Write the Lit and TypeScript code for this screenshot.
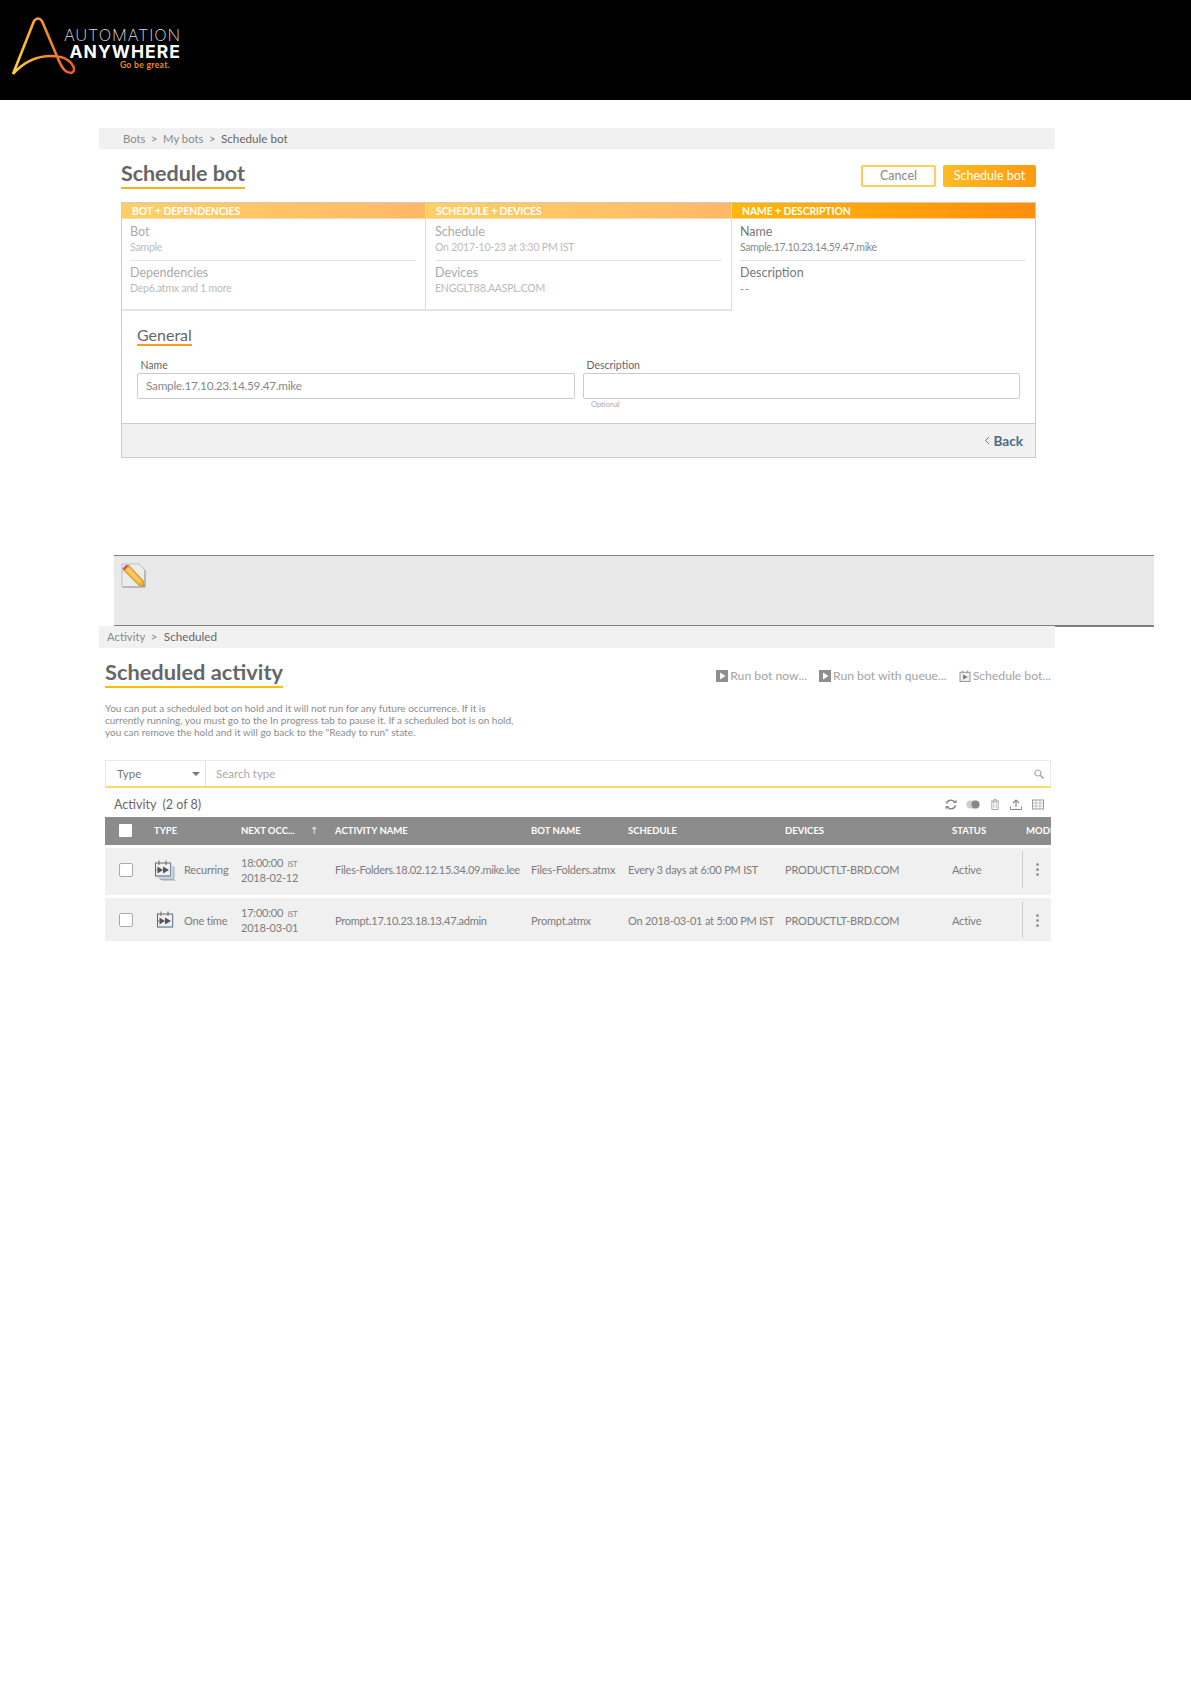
import { LitElement, html, css, svg } from "lit";
import { customElement } from "lit/decorators.js";

const playSquare = html`<svg class="act-ico" viewBox="0 0 12 12"><rect width="12" height="12" fill="#8f8f8f"/><path d="M4 2.5 L9.5 6 L4 9.5Z" fill="#fff"/></svg>`;
const calPlay = html`<svg class="act-ico" viewBox="0 0 12 13"><rect x=".6" y="2.4" width="10.8" height="10" fill="#eee" stroke="#8f8f8f" stroke-width="1"/><path d="M3.5 .5V3M8.5 .5V3" stroke="#8f8f8f"/><path d="M4 4.8 L9 7.5 L4 10.2Z" fill="#777"/></svg>`;
const typeOnce = svg`<rect x="1.5" y="4" width="15" height="13" fill="none" stroke="#666"/><path d="M5 1.5V6M12 1.5V6" stroke="#666"/><path d="M1.5 17.4h15.4V4" fill="none" stroke="#7ea9d1" stroke-width=".8"/><path d="M3.5 7.5 L9 11 L3.5 14.5ZM9 7.5 L15 11 L9 14.5Z" fill="#555"/><path d="M1 11h3" stroke="#666" stroke-width=".8"/>`;

@customElement("app-root")
export class AppRoot extends LitElement {
  static styles = css`
    :host { display: block; width: 1191px; height: 1684px; background: #fff; font-family: Lato, "Open Sans", sans-serif; color: #777; overflow: hidden; }
    * { box-sizing: border-box; }
    .top { height: 100px; background: #000; display: flex; padding: 15px 0 0 11px; }
    .logo-svg { width: 64px; height: 64px; display: block; }
    .logo-text { width: 107px; margin-left: -1px; padding-top: 13px; display: flex; flex-direction: column; align-items: flex-end; font-family: Inter, sans-serif; }
    .lt1 { color: #ddd; font-weight: 200; font-size: 16.5px; line-height: 15px; letter-spacing: .85px; white-space: nowrap; }
    .lt2 { color: #fff; font-weight: 700; font-size: 17.5px; line-height: 17px; letter-spacing: 1.05px; white-space: nowrap; }
    .lt3 { color: #e88a2a; font-weight: 700; font-size: 8.6px; line-height: 9px; margin: 1px 11px 0 0; white-space: nowrap; font-family: Lato, sans-serif; letter-spacing: .3px; }

    .sec1 { margin: 28px 0 0 99px; width: 956px; }
    .crumb { height: 21px; background: #f1f1f1; font-size: 11.3px; line-height: 20px; color: #8a8a8a; display: flex; align-items: baseline; gap: 5.5px; padding-left: 24px; white-space: nowrap; }
    .crumb b { font-weight: 400; color: #666; font-size: 11.7px; }
    .crumb.second { height: 22px; padding-left: 8px; margin-top: -1px; position: relative; }
    .crumb.second b { margin-left: 1px; }
    .inner { margin-left: 22px; width: 915px; }
    .title-row { display: flex; justify-content: space-between; align-items: flex-start; height: 39px; margin-top: 14px; }
    .h1 { display: inline-block; font-size: 21.5px; font-weight: 700; line-height: 21px; color: #666; padding-bottom: 3px; border-bottom: 2px solid #ffae14; white-space: nowrap; letter-spacing: -.05px; }
    .btns { display: flex; gap: 7px; margin-top: 2px; }
    .btn { height: 22px; border-radius: 2px; font-size: 12.5px; line-height: 18px; text-align: center; }
    .btn.c { width: 75px; border: 2px solid #ffcf55; color: #888; background: #fff; }
    .btn.s { width: 93px; background: linear-gradient(90deg, #ffbb22, #ff9a10); color: #fff; line-height: 21px; }

    .panel { border: 1px solid #ccc; height: 256px; display: flex; flex-direction: column; }
    .tabs { display: grid; grid-template-columns: 304px 306px 303px; height: 108px; flex: none; }
    .tab { display: flex; flex-direction: column; border-right: 1px solid #ddd; border-bottom: 2px solid #e4e4e4; }
    .tab.cur { border: 0; }
    .tab-h { height: 16px; flex: none; padding-left: 10px; font-size: 10.4px; line-height: 16px; font-weight: 700; color: #fff; white-space: nowrap; border-bottom: 1px solid #ffd9a0; letter-spacing: -.1px; background: linear-gradient(90deg, #ffcf66, #ffb866); }
    .tab.cur .tab-h { background: linear-gradient(90deg, #ffb70a, #ff8e0c); }
    .tab-b { padding: 3px 9px 0 9px; }
    .tab:first-child .tab-b, .tab.cur .tab-b { padding-left: 8px; }
    .f { height: 38px; }
    .f + .f { border-top: 1px solid #e4e4e4; }
    .lab { font-size: 12.5px; line-height: 19px; color: #aaa; white-space: nowrap; }
    .f + .f .lab { padding-top: 2px; line-height: 19px; box-sizing: content-box; }
    .val { font-size: 10.5px; line-height: 13px; color: #bbb; white-space: nowrap; letter-spacing: -.2px; }
    .cur .lab { color: #777; }
    .cur .val { color: #888; letter-spacing: -.3px; }
    .cur .val.dash { letter-spacing: 1px; font-size: 11px; }
    .form { flex: 1; padding: 15px 15px 0 15px; }
    .h2 { display: inline-block; font-size: 16px; line-height: 17px; color: #666; border-bottom: 2px solid #ff9a1e; padding-bottom: 1px; vertical-align: top; }
    .h2-wrap { height: 33px; }
    .cols { display: grid; grid-template-columns: 438px 437px; column-gap: 8px; }
    .fl { font-size: 10.5px; line-height: 12px; height: 14px; color: #666; padding-left: 3.5px; }
    .inp { height: 26px; border: 1px solid #ccc; border-radius: 2px; font-size: 11.8px; line-height: 24px; color: #888; padding-left: 8px; white-space: nowrap; letter-spacing: -.27px; }
    .opt { font-size: 7.5px; line-height: 9px; color: #aaa; padding: 1px 0 0 8px; }
    .foot { height: 34px; flex: none; background: #f1f1f1; border-top: 1px solid #ccc; display: flex; justify-content: flex-end; align-items: center; gap: 3px; padding-right: 12px; color: #4d6a86; font-weight: 700; font-size: 13.6px; }

    .note { margin: 97px 0 0 114px; width: 1040px; height: 72px; background: #e9e9e9; border-top: 1px solid #808080; border-bottom: 2px solid #808080; padding: 7px 0 0 7px; }
    .pencil { width: 25px; height: 25px; display: block; }

    .sec2 { margin-left: 99px; width: 956px; }
    .inner2 { margin-left: 6px; width: 946px; }
    .title2 { display: flex; justify-content: space-between; align-items: flex-start; margin-top: 12px; height: 42px; }
    .h1b { border-bottom-color: #ffbf00; font-size: 21.8px; line-height: 24px; padding-bottom: 2px; letter-spacing: 0; }
    .acts { display: flex; gap: 12px; font-size: 12.2px; line-height: 16px; color: #a3a3a3; margin: 8px 0 0 0; white-space: nowrap; font-weight: 400; }
    .act { display: flex; align-items: center; gap: 2px; }
    .act-ico { width: 12px; height: 12px; flex: none; }
    .desc { font-size: 10px; line-height: 12px; color: #8c8c8c; white-space: nowrap; height: 58px; }
    .search { height: 28px; display: flex; border: 1px solid #e9e9e9; border-bottom: 2px solid #ffd966; font-size: 11.5px; line-height: 25px; }
    .s-type { width: 100px; flex: none; border-right: 1px solid #e4e4e4; display: flex; justify-content: space-between; align-items: center; padding: 0 5px 0 11px; color: #777; }
    .caret { width: 0; height: 0; border: 4px solid transparent; border-top: 4px solid #777; border-bottom: 0; }
    .s-in { flex: 1; padding-left: 10px; color: #aaa; display: flex; justify-content: space-between; align-items: center; padding-right: 6px; }
    .s-ico { width: 10px; height: 10px; }
    .list-h { height: 29px; display: flex; justify-content: space-between; align-items: center; padding: 4px 6px 0 9px; font-size: 12.5px; color: #666; }
    .tools { display: flex; gap: 9px; align-items: center; }
    .tools svg { display: block; height: 11px; width: 12px; }
    .tools svg.w { width: 14px; }
    .tbl { overflow: hidden; }
    .row { display: grid; grid-template-columns: 49px 87px 94px 196px 97px 157px 167px 74px 25px; align-items: center; white-space: nowrap; }
    .hd { height: 28px; background: #8c8c8c; color: #fff; font-size: 9.5px; font-weight: 700; margin-bottom: 3px; padding-bottom: 1px; }
    .rw { background: #f0f0f0; font-size: 11px; letter-spacing: -.2px; color: #7c7c7c; }
    .rw.a { height: 47px; margin-bottom: 3px; padding-bottom: 4px; }
    .rw.b { height: 43px; padding-top: 1px; }
    .chk { justify-self: start; margin-left: 14px; width: 14px; height: 14px; background: #fff; border: 1px solid #aaa; border-radius: 2px; }
    .hd .chk { border: 0; width: 13px; height: 13px; border-radius: 1px; }
    .ty { display: flex; align-items: center; }
    .ty svg { width: 22px; height: 22px; flex: none; margin-right: 8px; }
    .tm { line-height: 13px; }
    .tm small { font-size: 7px; margin-left: 2px; }
    .nm { letter-spacing: -.27px; }
    .hd-sort { display: flex; justify-content: space-between; padding-right: 18px; }
    .hd-sort span + span { font-weight: 400; font-size: 8px; }
    .clip { overflow: hidden; }
    .more { align-self: stretch; border-left: 1px solid #ccc; margin-left: -4px; display: flex; flex-direction: column; align-items: center; justify-content: center; gap: 2px; margin-top: 3px; margin-bottom: 3px; width: 29px; }
    .more i { width: 3px; height: 3px; border-radius: 50%; background: #999; display: block; }
  `;

  private row(cls: string, icon: unknown, type: string, t: string, d: string, name: string, bot: string, sch: string) {
    return html`<div class="row rw ${cls}">
      <div class="chk"></div>
      <div class="ty"><svg viewBox="0 0 22 22">${icon}</svg>${type}</div>
      <div class="tm">${t} <small>IST</small><br />${d}</div>
      <div class="nm">${name}</div><div>${bot}</div><div>${sch}</div>
      <div>PRODUCTLT-BRD.COM</div><div>Active</div>
      <div class="more"><i></i><i></i><i></i></div>
    </div>`;
  }

  render() {
    const once = svg`<g transform="translate(2,1)">${typeOnce}</g>`;
    const rec = svg`<path d="M6 20.5h14V8M8 22h14" fill="none" stroke="#999" stroke-width=".8"/><path d="M4 19h15V7" fill="none" stroke="#7ea9d1" stroke-width=".8"/>${typeOnce}`;
    return html`
      <div class="top">
        <svg class="logo-svg" viewBox="0 0 64 64">
          <defs><linearGradient id="lg" x1="0" y1="0" x2="1" y2="0"><stop offset="0" stop-color="#ffd23a"/><stop offset=".45" stop-color="#f8982a"/><stop offset="1" stop-color="#ec5a2c"/></linearGradient></defs>
          <path d="M2 59 L23 6 Q27 1 31 6 L48 46 Q53 58 60 58 Q65 56 62 51 Q57 41 40 41 Q18 41 2 59" fill="none" stroke="url(#lg)" stroke-width="2.6" stroke-linejoin="round"/>
        </svg>
        <div class="logo-text"><div class="lt1">AUTOMATION</div><div class="lt2">ANYWHERE</div><div class="lt3">Go be great.</div></div>
      </div>

      <div class="sec1">
        <div class="crumb"><span>Bots</span><span>&gt;</span><span>My bots</span><span>&gt;</span><b>Schedule bot</b></div>
        <div class="inner">
          <div class="title-row">
            <div class="h1">Schedule bot</div>
            <div class="btns"><div class="btn c">Cancel</div><div class="btn s">Schedule bot</div></div>
          </div>
          <div class="panel">
            <div class="tabs">
              <div class="tab"><div class="tab-h">BOT + DEPENDENCIES</div><div class="tab-b">
                <div class="f"><div class="lab">Bot</div><div class="val">Sample</div></div>
                <div class="f"><div class="lab">Dependencies</div><div class="val">Dep6.atmx and 1 more</div></div>
              </div></div>
              <div class="tab"><div class="tab-h">SCHEDULE + DEVICES</div><div class="tab-b">
                <div class="f"><div class="lab">Schedule</div><div class="val">On 2017-10-23 at 3:30 PM IST</div></div>
                <div class="f"><div class="lab">Devices</div><div class="val">ENGGLT88.AASPL.COM</div></div>
              </div></div>
              <div class="tab cur"><div class="tab-h">NAME + DESCRIPTION</div><div class="tab-b">
                <div class="f"><div class="lab">Name</div><div class="val">Sample.17.10.23.14.59.47.mike</div></div>
                <div class="f"><div class="lab">Description</div><div class="val dash">--</div></div>
              </div></div>
            </div>
            <div class="form">
              <div class="h2-wrap"><div class="h2">General</div></div>
              <div class="cols">
                <div><div class="fl">Name</div><div class="inp">Sample.17.10.23.14.59.47.mike</div></div>
                <div><div class="fl">Description</div><div class="inp"></div><div class="opt">Optional</div></div>
              </div>
            </div>
            <div class="foot">
              <svg width="6" height="9" viewBox="0 0 6 9"><path d="M5 1 L1.5 4.5 L5 8" fill="none" stroke="#777" stroke-width="1"/></svg>
              <span>Back</span>
            </div>
          </div>
        </div>
      </div>

      <div class="note">
        <svg class="pencil" viewBox="0 0 25 25">
          <path d="M1 1H18L24 7V24H1Z" fill="#ececec" stroke="#bdbdbd"/>
          <path d="M2 24H24V7" fill="none" stroke="#9f9f9f"/>
          <path d="M2.5 7 L7.5 2 L22.5 18 L23 23 L18 22.5Z" fill="#f2b233" stroke="#a97a24" stroke-width=".7"/>
          <path d="M5 7 L8 4 L20 18 L18 20Z" fill="#f8cb5e"/>
          <path d="M1.5 5.5 L5.5 1.5 L7.5 3 L3 7.5Z" fill="#c9595e"/>
        </svg>
      </div>

      <div class="sec2">
        <div class="crumb second"><span>Activity</span><span>&gt;</span><b>Scheduled</b></div>
        <div class="inner2">
          <div class="title2">
            <div class="h1 h1b">Scheduled activity</div>
            <div class="acts">
              <div class="act">${playSquare}Run bot now...</div>
              <div class="act">${playSquare}Run bot with queue...</div>
              <div class="act">${calPlay}Schedule bot...</div>
            </div>
          </div>
          <div class="desc">You can put a scheduled bot on hold and it will not run for any future occurrence. If it is<br />currently running, you must go to the In progress tab to pause it. If a scheduled bot is on hold,<br />you can remove the hold and it will go back to the "Ready to run" state.</div>
          <div class="search">
            <div class="s-type">Type<span class="caret"></span></div>
            <div class="s-in">Search type
              <svg class="s-ico" viewBox="0 0 10 10"><circle cx="4" cy="4" r="3" fill="none" stroke="#aaa" stroke-width="1.2"/><path d="M6.3 6.3 L9.5 9.5" stroke="#aaa" stroke-width="1.6"/></svg>
            </div>
          </div>
          <div class="list-h">
            <div>Activity&nbsp; (2 of 8)</div>
            <div class="tools">
              <svg viewBox="0 0 12 11"><path d="M1.5 4.5 A4.5 4.5 0 0 1 9.5 3 M10.5 6.5 A4.5 4.5 0 0 1 2.5 8" fill="none" stroke="#888" stroke-width="1.4"/><path d="M8 4h3.5V.5ZM4 7H.5v3.5Z" fill="#888"/></svg>
              <svg class="w" viewBox="0 0 14 11"><rect x=".5" y="1.5" width="13" height="8" rx="4" fill="#ccc"/><circle cx="9.5" cy="5.5" r="4" fill="#888"/></svg>
              <svg viewBox="0 0 12 11"><path d="M2 2h8M4.5 2V.7h3V2" fill="none" stroke="#aaa"/><path d="M2.8 3v7.5h6.4V3Z" fill="none" stroke="#aaa"/><path d="M6 4.5v4.5M4.5 4.5v4.5M7.5 4.5v4.5" stroke="#bbb" stroke-width=".6"/></svg>
              <svg viewBox="0 0 12 11"><path d="M6 8V1.5M3 4 L6 1 L9 4" fill="none" stroke="#888" stroke-width="1.1"/><path d="M.5 7.5V10.5H11.5V7.5" fill="none" stroke="#888"/></svg>
              <svg class="w" viewBox="0 0 14 11"><rect x="1.5" y="1" width="11" height="9" fill="none" stroke="#999"/><path d="M1.5 4h11M1.5 7h11M5 1v9M9 1v9" stroke="#aaa" stroke-width=".7"/></svg>
            </div>
          </div>
          <div class="tbl">
            <div class="row hd">
              <div class="chk"></div><div>TYPE</div>
              <div class="hd-sort"><span>NEXT OCC...</span><span>↑</span></div>
              <div>ACTIVITY NAME</div><div>BOT NAME</div><div>SCHEDULE</div><div>DEVICES</div><div>STATUS</div><div class="clip">MODIFIED</div>
            </div>
            ${this.row("a", rec, "Recurring", "18:00:00", "2018-02-12", "Files-Folders.18.02.12.15.34.09.mike.lee", "Files-Folders.atmx", "Every 3 days at 6:00 PM IST")}
            ${this.row("b", once, "One time", "17:00:00", "2018-03-01", "Prompt.17.10.23.18.13.47.admin", "Prompt.atmx", "On 2018-03-01 at 5:00 PM IST")}
          </div>
        </div>
      </div>
    `;
  }
}
